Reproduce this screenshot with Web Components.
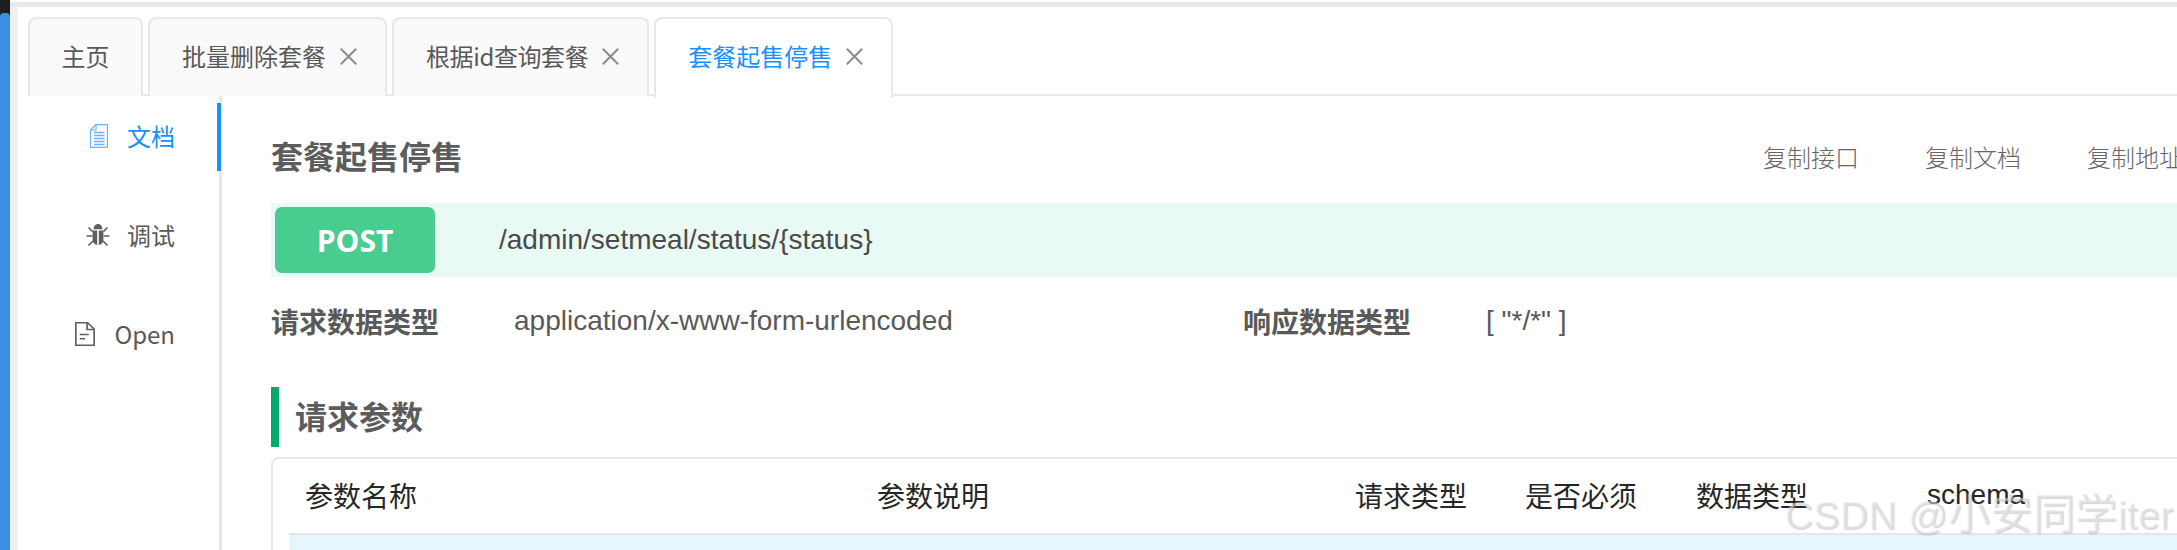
<!DOCTYPE html>
<html lang="zh"><head><meta charset="utf-8"><title>套餐起售停售</title>
<style>
html,body{margin:0;height:100%;background:#fff;overflow:hidden}
body{font-family:"Noto Sans CJK SC","Noto Sans",sans-serif;color:#555}
x-nav-item svg{display:block}
x-watermark span{font-size:42px}
</style></head>
<body>
<x-app>
  <x-tabs slot="tabs">
    <x-tab plain>主页</x-tab>
    <x-tab>批量删除套餐</x-tab>
    <x-tab style="letter-spacing:-.4px">根据id查询套餐</x-tab>
    <x-tab active>套餐起售停售</x-tab>
  </x-tabs>
  <x-side-nav slot="nav">
    <x-nav-item active label="文档"><svg width="18" height="24" viewBox="0 0 18 24" fill="none" stroke="#69b1ff" stroke-width="1.1"><path d="M6 .6H17.4V23.4H.6V6Z"/><path d="M6 .6V6H.6"/><path d="M4 8.500H14.500M4 11.500H14.500M4 14.500H14.500M4 17.500H14.500M4 20.500H14.500" stroke-width="1.300"/></svg></x-nav-item>
    <x-nav-item label="调试" tight><svg width="24" height="24" viewBox="0 0 24 24"><path fill="#5f5f5f" d="M7.400 6.200C7.800 2.800 9.700 1 12 1s4.200 1.800 4.600 5.200ZM6.600 7.600H11.200V22C8.500 21.600 6.600 19.500 6.600 16.500ZM12.800 7.600H17.400V16.500C17.400 19.500 15.500 21.600 12.800 22Z"/><path stroke="#5f5f5f" stroke-width="1.700" fill="none" d="M2.500 4.500 6.500 8.500M21.500 4.500 17.500 8.500M.5 13H6.500M23.500 13H17.500M2.500 22.500 7 18M21.500 22.500 17 18"/></svg></x-nav-item>
    <x-nav-item label="Open"><svg width="20" height="24" viewBox="0 0 19 24" preserveAspectRatio="none" fill="none" stroke="#5f5f5f" stroke-width="1.600"><path d="M.8 .8H12L18.200 7V23.200H.8Z"/><path d="M11.500 .8V7.500H18.200"/><path d="M4.500 12.500H13M4.500 16.800H9.500"/></svg></x-nav-item>
  </x-side-nav>
  <x-doc>
    <x-doc-head slot="head" title="套餐起售停售">
      <x-copy-link>复制接口</x-copy-link><x-copy-link>复制文档</x-copy-link><x-copy-link>复制地址</x-copy-link>
    </x-doc-head>
    <x-method-bar slot="method" method="POST">/admin/setmeal/status/{status}</x-method-bar>
    <x-meta-row slot="meta" req="application/x-www-form-urlencoded" res='[ "*/*" ]'></x-meta-row>
    <x-section-title slot="section">请求参数</x-section-title>
    <x-param-table slot="table">
      <span>参数名称</span><span>参数说明</span><span>请求类型</span><span>是否必须</span><span>数据类型</span><span>schema</span>
    </x-param-table>
  </x-doc>
  <x-watermark slot="mark">CSDN @<span>小安同学</span>iter</x-watermark>
</x-app>
<script>
function def(name, css, html){
  customElements.define(name, class extends HTMLElement{
    connectedCallback(){
      if(this.shadowRoot) return;
      const r=this.attachShadow({mode:'open'});
      r.innerHTML='<style>'+css+'</style>'+(typeof html==='function'?html(this):html);
    }
  });
}
const CJK='"Noto Sans CJK SC","Noto Sans",sans-serif';
def('x-app',`
:host{display:grid;grid-template-columns:10px 8px 1fr;width:2177px;height:550px;overflow:hidden;position:relative;background:#fff}
.rail{background:#1e1e1e;display:flex;flex-direction:column;padding-top:13px;box-sizing:border-box}
.rail i{flex:1;background:#3b8fe0;border-radius:4px 4px 0 0}
.gut{background:#eff0f5;margin-top:2px}
.main{display:flex;flex-direction:column;min-width:0;padding-top:2px}
.top{height:5px;background:#e8e9ee;flex:none;margin-left:-8px}
.body{display:grid;grid-template-columns:194px 1fr;grid-template-rows:89px 1fr;padding:0 0 0 10px;flex:1;min-height:0}
.tabs{grid-column:1/3}
`,`<div class="rail"><i></i></div><div class="gut"></div>
<div class="main"><div class="top"></div>
<div class="body"><div class="tabs"><slot name="tabs"></slot></div><slot name="nav"></slot><slot></slot></div></div>
<slot name="mark"></slot>`);
def('x-tabs',`:host{display:flex;gap:5px;height:89px;box-sizing:border-box;padding-top:10px;border-bottom:2px solid #e8e8e8}`,`<slot></slot>`);
def('x-tab',`
:host{display:flex;align-items:center;height:79px;box-sizing:border-box;padding:0 28px 3px 32px;gap:14px;
 border:2px solid #e8e8e8;border-bottom:0;border-radius:8px 8px 0 0;background:#fafafa;
 font:24px/1 ${CJK};color:#595959;white-space:nowrap}
:host([plain]){padding:0 31.500px 3px}
:host([active]){background:#fff;color:#1890ff;padding:0 28px 5px 32px;height:81px;position:relative;z-index:1}
svg{display:block;flex:none}
`,t=>`<slot></slot>`+(t.hasAttribute('plain')?'':`<svg width="17" height="17" viewBox="0 0 17 17" stroke="#8c8c8c" stroke-width="2"><path d="M.8.8 16.200 16.200M16.200.8 .8 16.200"/></svg>`));
def('x-side-nav',`:host{display:flex;flex-direction:column;gap:31px;padding-top:7px;border-right:3px solid #e8e8e8;box-sizing:border-box;width:194px}`,`<slot></slot>`);
def('x-nav-item',`
:host{display:flex;align-items:center;justify-content:flex-end;gap:19px;height:68px;box-sizing:border-box;padding:0 42px 2px 0;margin-right:-2px;
 border-right:4px solid transparent;font:24px/1 ${CJK};color:#595959}
:host([active]){color:#1890ff;border-right-color:#1890ff}
:host([tight]){gap:17px}
span{display:block}
.ic{display:flex;justify-content:center}
`,t=>`<div class="ic"><slot></slot></div><span>${t.getAttribute('label')}</span>`);
def('x-doc',`:host{display:flex;flex-direction:column;min-width:0;padding-left:49px;width:1955px;box-sizing:border-box}`,
`<slot name="head"></slot><slot name="method"></slot><slot name="meta"></slot><slot name="section"></slot><slot name="table"></slot>`);
def('x-doc-head',`
:host{display:flex;align-items:center;justify-content:space-between;height:107px;box-sizing:border-box;padding-top:10px}
h1{margin:0;font:700 32px/1 ${CJK};color:#5c5c5c}
.acts{display:flex;gap:66px;padding-top:4px;width:414px;flex:none}
`,t=>`<h1>${t.getAttribute('title')}</h1><div class="acts"><slot></slot></div>`);
def('x-copy-link',`:host{display:block;font:200 24px/1 ${CJK};color:#666;white-space:nowrap;flex:none}`,`<slot></slot>`);
def('x-method-bar',`
:host{display:flex;align-items:center;height:74px;background:#e9f9f3;padding:4px;box-sizing:border-box;gap:64px}
b{display:flex;align-items:center;justify-content:center;width:160px;height:66px;padding-top:2px;box-sizing:border-box;border-radius:7px;background:#49cc90;color:#fff;font:700 30px/1 "Open Sans",sans-serif}
span{font:28px/1 "Liberation Sans",sans-serif;color:#4a4a4a}
`,t=>`<b>${t.getAttribute('method')}</b><span><slot></slot></span>`);
def('x-meta-row',`
:host{display:grid;grid-template-columns:243px 729px 243px 1fr;align-items:center;height:86px;padding-top:1px;box-sizing:border-box}
b{font:700 28px/1 ${CJK};color:#595959}
span{font:28px/1 "Liberation Sans",sans-serif;color:#595959}
`,t=>`<b>请求数据类型</b><span>${t.getAttribute('req')}</span><b>响应数据类型</b><span>${t.getAttribute('res')}</span>`);
def('x-section-title',`
:host{display:block;margin-top:24px;height:60px;box-sizing:border-box;border-left:8px solid #00ab6c;padding-left:16px;
 font:700 32px/56px ${CJK};color:#5c5c5c}`,`<slot></slot>`);
def('x-param-table',`
:host{display:block;margin-top:10px;border:2px solid #e8e8e8;border-right:0;border-bottom:0;border-radius:8px 0 0 0;padding:0 0 0 16px;height:120px;box-sizing:border-box}
.row{display:grid;grid-template-columns:572px 478px 170px 171px 231px 1fr;height:76px;align-items:center;padding:0 0 2px 16px;box-sizing:border-box;border-bottom:2px solid #e4e6e8;
 font:28px/1 ${CJK};color:#262626}
.fill{height:40px;background:#e6f6fe}
::slotted(span:last-child){font-family:"Liberation Sans",sans-serif;}
`,`<div class="row"><slot></slot></div><div class="fill"></div>`);
def('x-watermark',`
:host{position:absolute;left:1785px;top:490px;font:39px/1.200 "Liberation Sans","Noto Sans CJK SC",sans-serif;white-space:nowrap;letter-spacing:.4px;
 color:rgba(232,232,232,.5);text-shadow:1px 1px 1px rgba(120,120,120,.3);pointer-events:none;z-index:3}`,`<slot></slot>`);
</script>
</body></html>
